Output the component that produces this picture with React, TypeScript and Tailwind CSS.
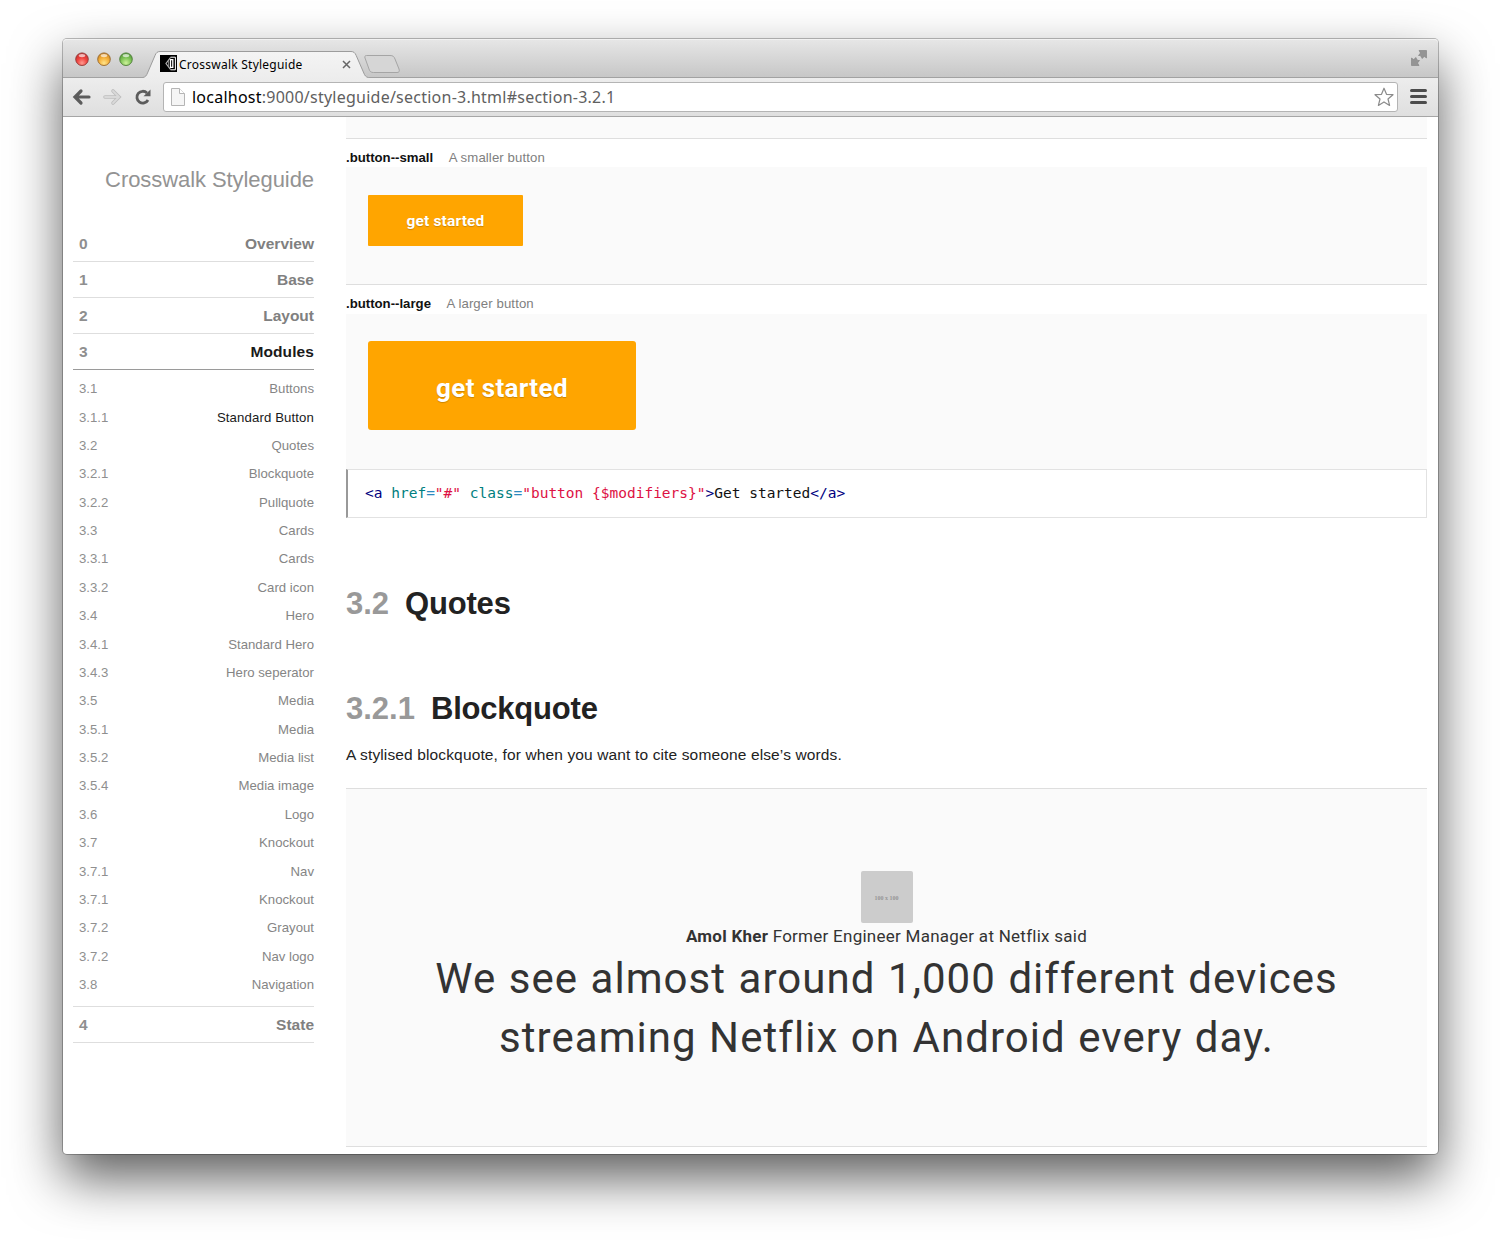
type Item = { id: string; label: string; active?: boolean };

const sections: Item[] = [
  { id: "0", label: "Overview" },
  { id: "1", label: "Base" },
  { id: "2", label: "Layout" },
  { id: "3", label: "Modules", active: true },
];

const modules: Item[] = [
  { id: "3.1", label: "Buttons" },
  { id: "3.1.1", label: "Standard Button", active: true },
  { id: "3.2", label: "Quotes" },
  { id: "3.2.1", label: "Blockquote" },
  { id: "3.2.2", label: "Pullquote" },
  { id: "3.3", label: "Cards" },
  { id: "3.3.1", label: "Cards" },
  { id: "3.3.2", label: "Card icon" },
  { id: "3.4", label: "Hero" },
  { id: "3.4.1", label: "Standard Hero" },
  { id: "3.4.3", label: "Hero seperator" },
  { id: "3.5", label: "Media" },
  { id: "3.5.1", label: "Media" },
  { id: "3.5.2", label: "Media list" },
  { id: "3.5.4", label: "Media image" },
  { id: "3.6", label: "Logo" },
  { id: "3.7", label: "Knockout" },
  { id: "3.7.1", label: "Nav" },
  { id: "3.7.1", label: "Knockout" },
  { id: "3.7.2", label: "Grayout" },
  { id: "3.7.2", label: "Nav logo" },
  { id: "3.8", label: "Navigation" },
];

function TrafficLights() {
  return (
    <svg width="60" height="18" viewBox="0 0 60 18" className="ml-[11px] mt-[10px] shrink-0">
      <defs>
        <radialGradient id="red" cx="50%" cy="80%" r="80%">
          <stop offset="0" stopColor="#ff9a90" />
          <stop offset="0.5" stopColor="#f0443f" />
          <stop offset="1" stopColor="#c22a2a" />
        </radialGradient>
        <radialGradient id="amber" cx="50%" cy="80%" r="80%">
          <stop offset="0" stopColor="#ffe48a" />
          <stop offset="0.5" stopColor="#f6b23c" />
          <stop offset="1" stopColor="#c9801d" />
        </radialGradient>
        <radialGradient id="green" cx="50%" cy="80%" r="80%">
          <stop offset="0" stopColor="#cdf29a" />
          <stop offset="0.5" stopColor="#83c75a" />
          <stop offset="1" stopColor="#4d9435" />
        </radialGradient>
      </defs>
      <circle cx="8" cy="9.2" r="6.3" fill="url(#red)" stroke="#8f3a38" strokeWidth="0.9" />
      <circle cx="30" cy="9.2" r="6.3" fill="url(#amber)" stroke="#94652e" strokeWidth="0.9" />
      <circle cx="52" cy="9.2" r="6.3" fill="url(#green)" stroke="#4d7a38" strokeWidth="0.9" />
      <ellipse cx="8" cy="5.6" rx="3.3" ry="1.7" fill="#fff" opacity="0.65" />
      <ellipse cx="30" cy="5.6" rx="3.3" ry="1.7" fill="#fff" opacity="0.65" />
      <ellipse cx="52" cy="5.6" rx="3.3" ry="1.7" fill="#fff" opacity="0.65" />
    </svg>
  );
}

function Favicon() {
  return (
    <svg width="17" height="17" viewBox="0 0 17 17" className="-mt-[2px] shrink-0">
      <rect width="17" height="17" fill="#000" />
      <path d="M10.500 2.500L6 8.500L10.500 14.500" fill="none" stroke="#b5b5b5" strokeWidth="1.2" />
      <path d="M8.500 6v5" stroke="#777" strokeWidth="1" />
      <path d="M10.500 2.200H15.400V14.800H10.500" fill="none" stroke="#fff" strokeWidth="1" />
      <path d="M10.500 4.700H12.800V12.300H10.500Z" fill="#000" stroke="#fff" strokeWidth="1.3" />
    </svg>
  );
}

function TitleBar() {
  return (
    <div className="flex h-[39px] items-start rounded-t-[4px] border-t border-[#f2f2f2] bg-gradient-to-b from-[#e6e6e6] to-[#c6c6c6] shadow-[inset_0_-1px_0_#a2a2a2]">
      <TrafficLights />
      <div className="relative ml-[9px] mt-[11px] flex h-[27px] w-[230px] items-center">
        <svg width="230" height="27" viewBox="0 0 230 27" className="absolute inset-0">
          <defs>
            <linearGradient id="tab" x1="0" y1="0" x2="0" y2="1">
              <stop offset="0" stopColor="#f4f4f4" />
              <stop offset="1" stopColor="#ededed" />
            </linearGradient>
          </defs>
          <path d="M0 26.500C2.500 26 3.500 24.500 4.500 22L12 4.500C13.200 1.600 14.500 0.500 17 0.500H208C210.500 0.500 212 1.600 213.200 4.500L220.800 22C221.800 24.500 222.800 26 225.300 26.500V27H0Z" fill="url(#tab)" />
          <path d="M0 26.500C2.500 26 3.500 24.500 4.500 22L12 4.500C13.200 1.600 14.500 0.500 17 0.500H208C210.500 0.500 212 1.600 213.200 4.500L220.800 22C221.800 24.500 222.800 26 225.300 26.500" fill="none" stroke="#9c9c9c" />
        </svg>
        <div className="relative flex w-full items-center pl-[17px]">
          <Favicon />
          <span className="ml-[2px] w-[160px] whitespace-nowrap font-['Noto_Sans',sans-serif] text-[12px] leading-[16px] tracking-[0.24px] text-black">
            Crosswalk Styleguide
          </span>
          <svg width="9" height="9" viewBox="0 0 9 9" className="ml-[3px]">
            <path d="M1 1L8 8M8 1L1 8" stroke="#666" strokeWidth="1.5" />
          </svg>
        </div>
      </div>
      <svg width="38" height="20" viewBox="0 0 38 20" className="-ml-[10px] mt-[14px]">
        <path d="M3.500 1.500H27C30 1.500 31 2.500 32 5L36 15C36.800 17.500 36 18.500 34 18.500H10.500C8 18.500 6.800 17.500 6 15L2 4C1.500 2.500 2 1.500 3.500 1.500Z" fill="#d6d6d6" stroke="#a5a5a5" />
      </svg>
      <svg width="16" height="16" viewBox="0 0 16 16" className="ml-auto mr-[11px] mt-[10px]">
        <path d="M8 0.500H15.500V8L13.300 6.500L11 8.500L10.500 7L9 5.500H7.500L9.500 3Z" fill="#949494" stroke="#808080" strokeWidth="0.600" />
        <path d="M8 15.500H0.500V8L2.700 9.500L5 7.500L5.500 9L7 10.500H8.500L6.500 13Z" fill="#949494" stroke="#808080" strokeWidth="0.600" />
      </svg>
    </div>
  );
}

function Toolbar() {
  return (
    <div className="flex h-[39px] items-center border-b border-[#a6a6a6] bg-gradient-to-b from-[#ededed] to-[#dfdfdf] font-['Noto_Sans',sans-serif]">
      <svg width="100" height="38" viewBox="0 0 100 38" className="shrink-0">
        <path d="M26 19H12.500M18 13L12 19L18 25" fill="none" stroke="#5c5c5c" strokeWidth="3.200" strokeLinejoin="miter" strokeLinecap="round" />
        <path d="M42 19H55.500M50 13L56 19L50 25" fill="none" stroke="#bebebe" strokeWidth="3.600" strokeLinecap="round" />
        <path d="M42 19H55.500M50 13L56 19L50 25" fill="none" stroke="#d9d9d9" strokeWidth="1.800" strokeLinecap="round" />
        <path d="M85 22A5.900 5.900 0 1 1 84 15" fill="none" stroke="#5c5c5c" strokeWidth="2.800" />
        <path d="M87.500 11.500V18.300H80.500Z" fill="#5c5c5c" />
      </svg>
      <div className="flex h-[30px] flex-1 items-center rounded-[3px] border border-[#b4b4b4] bg-white">
        <svg width="14" height="18" viewBox="0 0 14 18" className="ml-[7px] shrink-0">
          <path d="M0.500 0.500H8.500L13.500 5.500V17.500H0.500Z" fill="#f5f5f5" stroke="#b5b5b5" />
          <path d="M8.500 0.500V5.500H13.500" fill="#fff" stroke="#b5b5b5" />
        </svg>
        <span className="ml-[7px] whitespace-nowrap text-[16px] leading-[22px] tracking-[0.24px] text-[#606060]">
          <span className="text-black">localhost</span>:9000/styleguide/section-3.html#section-3.2.1
        </span>
        <svg width="20" height="20" viewBox="0 0 20 20" className="ml-auto mr-[3px]">
          <path d="M10 1.200L12.500 7.300L19 7.700L14 12L15.600 18.400L10 14.900L4.400 18.400L6 12L1 7.700L7.500 7.300Z" fill="#fff" stroke="#8b8b8b" strokeWidth="1.200" strokeLinejoin="round" />
        </svg>
      </div>
      <div className="ml-[12px] mr-[11px] flex w-[17px] flex-col gap-[3px] pb-px">
        <div className="h-[3px] rounded-full bg-[#4c4c4c]" />
        <div className="h-[3px] rounded-full bg-[#4c4c4c]" />
        <div className="h-[3px] rounded-full bg-[#4c4c4c]" />
      </div>
    </div>
  );
}

function SectionRow({ item }: { item: Item }) {
  return (
    <li
      className={
        item.active
          ? "flex h-9 items-center justify-between border-b border-[#9a9a9a] pl-[6px] text-[15.5px] font-bold"
          : "flex h-9 items-center justify-between border-b border-[#dedede] pl-[6px] text-[15.5px] font-bold"
      }
    >
      <span className="text-[#8f8f8f]">{item.id}</span>
      <span className={item.active ? "tracking-[0.1px] text-[#1a1a1a]" : "text-[#808080]"}>{item.label}</span>
    </li>
  );
}

function Sidebar() {
  return (
    <nav className="ml-[10px] w-[241px] shrink-0">
      <h1 className="mt-[49px] text-right text-[22px] leading-[28px] tracking-[-0.07px] text-[#939393]">Crosswalk Styleguide</h1>
      <ul className="mt-[32px]">
        {sections.map((s) => (
          <SectionRow key={s.id} item={s} />
        ))}
      </ul>
      <ul className="mt-[5px] pb-[7px]">
        {modules.map((m, i) => (
          <li key={i} className="flex h-[28.38px] items-center justify-between pl-[6px] text-[13.2px] leading-[16px]">
            <span className="text-[#8f8f8f]">{m.id}</span>
            <span className={m.active ? "tracking-[0.12px] text-[#1a1a1a]" : "text-[#858585]"}>{m.label}</span>
          </li>
        ))}
      </ul>
      <ul className="border-t border-[#dedede]">
        <SectionRow item={{ id: "4", label: "State" }} />
      </ul>
    </nav>
  );
}

function ModifierLabel({ name, note }: { name: string; note: string }) {
  return (
    <div className="flex h-[28px] items-center gap-[15.5px] pt-[10px] text-[13.2px] leading-[16px]">
      <b className="text-[#111]">{name}</b>
      <span className="tracking-[0.1px] text-[#808080]">{note}</span>
    </div>
  );
}

function Heading({ id, label }: { id: string; label: string }) {
  return (
    <h2 className="flex gap-[16px] text-[31px] font-bold leading-[36px] text-[#222]">
      <span className="text-[#999]">{id}</span>
      <span className="tracking-[-0.2px]">{label}</span>
    </h2>
  );
}

function Main() {
  return (
    <main className="ml-[32px] w-[1081px] shrink-0">
      <div className="h-[22px] border-b border-[#dedede] bg-[#fafafa]" />
      <ModifierLabel name=".button--small" note="A smaller button" />
      <div className="h-[118px] border-b border-[#dedede] bg-[#fafafa] pl-[22px] pt-[28px]">
        <a className="flex h-[51px] w-[155px] items-center justify-center rounded-[1px] bg-[#ffa500] pt-[2px] font-['Roboto',sans-serif] text-[15.5px] font-bold tracking-[0.15px] text-white [text-shadow:0_1px_1px_rgba(0,0,0,0.2)]">
          get started
        </a>
      </div>
      <ModifierLabel name=".button--large" note="A larger button" />
      <div className="mt-px h-[155px] bg-[#fafafa] pl-[22px] pt-[27px]">
        <a className="flex h-[89px] w-[268px] items-center justify-center rounded-[3px] bg-[#ffa500] pt-[5px] font-['Roboto',sans-serif] text-[26px] font-bold tracking-[0.37px] text-white [text-shadow:0_1px_1px_rgba(0,0,0,0.2)]">
          get started
        </a>
      </div>
      <pre className="flex h-[49px] items-center border border-l-2 border-[#e2e2e2] border-l-[#999] pl-[17px] font-['DejaVu_Sans_Mono',monospace] text-[14.5px] text-[#111]">
        <code className="font-['DejaVu_Sans_Mono',monospace]">
          <span className="text-[#000080]">&lt;a</span> <span className="text-[#008080]">href</span>
          <span className="text-[#2b8abf]">=</span>
          <span className="text-[#dd1144]">"#"</span> <span className="text-[#008080]">class</span>
          <span className="text-[#2b8abf]">=</span>
          <span className="text-[#dd1144]">{'"button {$modifiers}"'}</span>
          <span className="text-[#000080]">&gt;</span>Get started
          <span className="text-[#000080]">&lt;/a&gt;</span>
        </code>
      </pre>
      <div className="mt-[68px]">
        <Heading id="3.2" label="Quotes" />
      </div>
      <div className="mt-[69px]">
        <Heading id="3.2.1" label="Blockquote" />
      </div>
      <p className="mt-[18px] whitespace-nowrap text-[15.5px] leading-[20px] tracking-[0.135px] text-[#222]">
        A stylised blockquote, for when you want to cite someone else’s words.
      </p>
      <blockquote className="mt-[23px] flex h-[359px] flex-col items-center border-y border-[#dedede] bg-[#fafafa] pt-[82px] font-['Roboto',sans-serif] text-[#333]">
        <div className="flex h-[52px] w-[52px] items-center justify-center rounded-[2px] bg-[#ccc] pt-[2px] font-['Liberation_Serif',serif] text-[6px] font-bold leading-none text-[#969696]">
          100 x 100
        </div>
        <p className="mt-[2px] text-[17px] leading-[22px] tracking-[0.26px]">
          <b>Amol Kher</b> Former Engineer Manager at Netflix said
        </p>
        <p className="mt-[2px] text-center text-[42px] leading-[59px] tracking-[1.05px] [word-spacing:1px]">
          We see almost around 1,000 different devices
          <br />
          streaming Netflix on Android every day.
        </p>
      </blockquote>
    </main>
  );
}

export default function App() {
  return (
    <div className="h-[1240px] w-[1500px] overflow-hidden bg-white pl-[63px] pt-[39px]">
      <div className="h-[1115px] w-[1375px] rounded-[4px] bg-white font-['Liberation_Sans',sans-serif] shadow-[0_0_0_1px_rgba(0,0,0,0.25),0_24px_52px_rgba(0,0,0,0.64)]">
        <TitleBar />
        <Toolbar />
        <div className="flex h-[1037px] items-start overflow-hidden rounded-b-[4px]">
          <Sidebar />
          <Main />
        </div>
      </div>
    </div>
  );
}
